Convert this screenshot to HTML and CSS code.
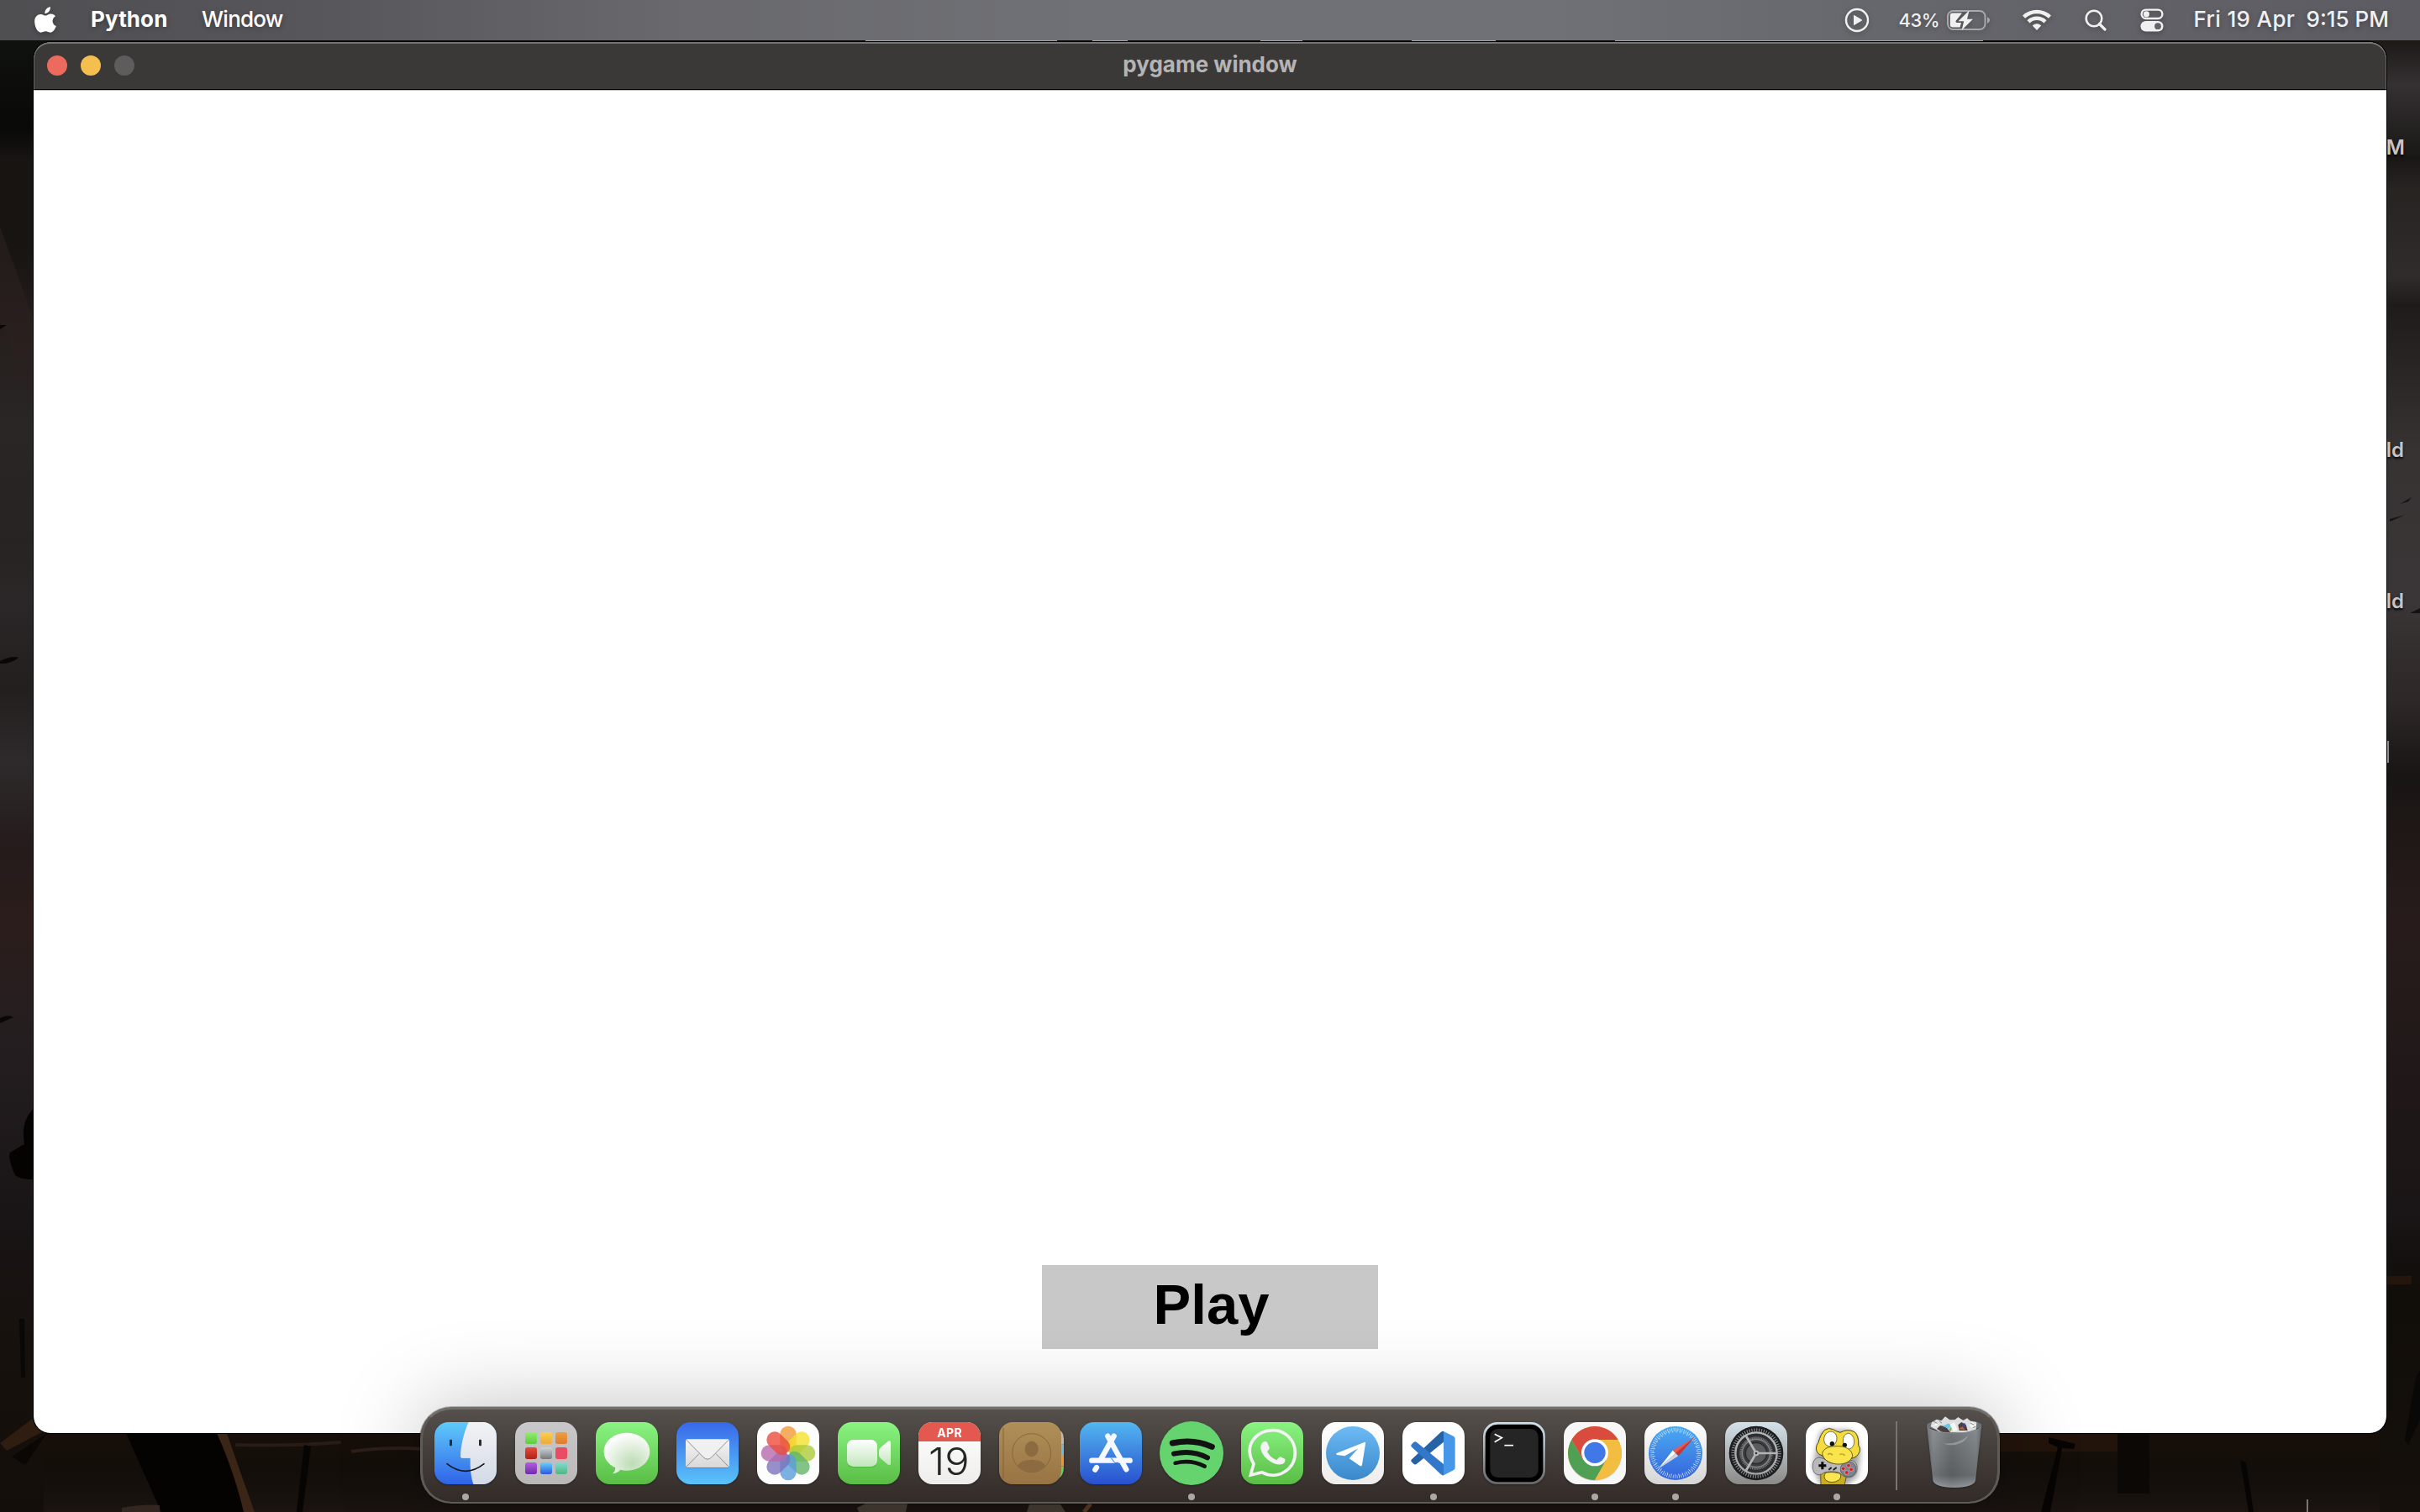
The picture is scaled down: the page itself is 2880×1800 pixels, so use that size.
FILE: index.html
```
<!DOCTYPE html>
<html lang="en">
<head>
<meta charset="utf-8">
<title>pygame window</title>
<link rel="stylesheet" href="styles.css">
</head>
<body>
<div class="desktop">
  <svg class="wallpaper" viewBox="0 0 2880 1800" aria-hidden="true">
    <defs>
      <linearGradient id="wl" x1="0" y1="0" x2="0" y2="1">
        <stop offset="0" stop-color="#10120e"/><stop offset=".06" stop-color="#090908"/>
        <stop offset=".08" stop-color="#171412"/><stop offset=".14" stop-color="#171412"/>
        <stop offset=".2" stop-color="#261f1d"/><stop offset=".26" stop-color="#292625"/>
        <stop offset=".34" stop-color="#262322"/><stop offset=".38" stop-color="#2b2728"/>
        <stop offset=".44" stop-color="#231f1f"/><stop offset=".49" stop-color="#2e2a2b"/>
        <stop offset=".55" stop-color="#241b1a"/><stop offset=".6" stop-color="#2b1d1b"/>
        <stop offset=".68" stop-color="#241e20"/>
        <stop offset=".8" stop-color="#191415"/><stop offset=".88" stop-color="#17110e"/>
        <stop offset="1" stop-color="#140e0a"/>
      </linearGradient>
      <linearGradient id="wr" x1="0" y1="0" x2="0" y2="1">
        <stop offset="0" stop-color="#1c1917"/><stop offset=".03" stop-color="#353133"/>
        <stop offset=".08" stop-color="#191716"/><stop offset=".1" stop-color="#262321"/><stop offset=".16" stop-color="#2f2c2b"/>
        <stop offset=".18" stop-color="#1f1b1a"/><stop offset=".28" stop-color="#373333"/>
        <stop offset=".38" stop-color="#3a3536"/><stop offset=".45" stop-color="#2d2727"/>
        <stop offset=".5" stop-color="#191514"/><stop offset=".6" stop-color="#271c1b"/>
        <stop offset=".8" stop-color="#1a1516"/><stop offset=".85" stop-color="#110d09"/>
        <stop offset="1" stop-color="#15100c"/>
      </linearGradient>
      <linearGradient id="wb" x1="0" y1="0" x2="0" y2="1">
        <stop offset="0" stop-color="#180e09"/><stop offset=".5" stop-color="#130e0a"/><stop offset="1" stop-color="#1a1310"/>
      </linearGradient>
    </defs>
    <rect width="2880" height="1800" fill="#120e0b"/>
    <rect y="48" width="60" height="1752" fill="url(#wl)"/>
    <rect x="2820" y="48" width="60" height="1752" fill="url(#wr)"/>
    <rect x="52" y="1700" width="2780" height="100" fill="url(#wb)"/>
    <path d="M0 270L40 380V480L0 380Z" fill="#2c211f" opacity=".6"/>
    <path d="M0 787Q14 780 22 783Q12 791 0 790Z M0 1212Q10 1207 16 1211L0 1218Z M0 387H8L0 392Z" fill="#0a0807"/>
    <path d="M2856 600L2870 592L2866 597Z M2844 618L2862 613L2844 621Z M2868 730L2880 724V730Z" fill="#141111"/>
    <path d="M40 1320 Q27 1332 28 1352 L29 1362 L12 1372 Q9 1378 17 1397 Q20 1404 40 1404Z" fill="#040302"/>
    <path d="M23 1570 L29 1570 L30 1640 L25 1640Z" fill="#0a0806"/>
    <path d="M0 1718 L40 1688 L52 1704 L8 1727Z" fill="#301d11"/>
    <path d="M14 1734 L56 1706 L30 1744Z" fill="#0a0705"/>
    <path d="M150 1706 H258 L300 1800 H192Z" fill="#040302"/>
    <path d="M258 1706 H270 Q285 1750 303 1800 H290 Q278 1750 258 1706Z" fill="#3a2517"/>
    <path d="M280 1720 Q345 1722 406 1717" stroke="#291b16" stroke-width="4" fill="none"/>
    <path d="M418 1728 Q460 1722 505 1725" stroke="#2c1e18" stroke-width="4" fill="none"/>
    <path d="M362 1720 L370 1722 L360 1800 H353Z" fill="#070504"/>
    <path d="M145 1795 Q170 1790 190 1792 V1800 H145Z" fill="#33251f"/>
    <path d="M2380 1706 H2520 V1728 H2380Z" fill="#22140b"/>
    <path d="M2520 1706 h38 v72 h-38z" fill="#0c0806"/>
    <path d="M2438 1711 L2470 1719 L2468 1725 L2454 1724 L2440 1800 H2429 L2449 1723 L2438 1718Z" fill="#070504"/>
    <path d="M2666 1738 L2673 1741 L2682 1800 H2676Z" fill="#070504"/>
    <path d="M2746 1785 V1800" stroke="#777" stroke-width="2"/>
    <path d="M2875 1640 L2880 1632 V1690 L2866 1720 L2862 1714Z" fill="#0a0806"/>
    <path d="M2840 1519 H2870 V1529 H2840Z" fill="#24160c"/>
    <path d="M1020 1795 L1030 1790 H1080 L1078 1800 H1022Z M1225 1791 H1262 L1268 1800 H1222Z" fill="#443c33"/>
    <path d="M1290 1800 L1298 1790" stroke="#583a23" stroke-width="5"/>
    <path d="M1030 49 H1258 M1300 49H1342 M1500 49 H1550 M1680 49 H1780 M1922 49H2360" stroke="#a3a4aa" stroke-width="2"/>
  </svg>

  <div class="file-label label-a">M</div>
  <div class="file-label label-b">ld</div>
  <div class="file-label label-c">ld</div>
  <div class="file-edge"></div>

  <header class="menubar">
    <div class="menu-left">
      <svg class="apple" viewBox="0 0 78 94" aria-hidden="true"><path fill="#fff" d="M57 1C58 15 47 25 37 25C36 12 46 2 57 1ZM40 32C46 32 50 26 59 26C67 26 73 31 75 34C60 44 63 64 78 70C74 82 66 93 57 93C50 93 47 89 40 89C33 89 29 93 23 93C9 93 0 69 0 53C0 36 11 27 22 27C30 27 34 32 40 32Z"/></svg>
      <span class="app-name">Python</span>
      <span class="menu-item">Window</span>
    </div>
    <div class="menu-right">
      <svg class="ic-play" viewBox="0 0 30 30" aria-hidden="true"><circle cx="15" cy="15" r="13" fill="none" stroke="#f0f0f0" stroke-width="2.4"/><path fill="#f0f0f0" d="M11 9.5Q11 8.6 12 9.2L20.5 14.2Q21.6 15 20.5 15.8L12 20.8Q11 21.4 11 20.5Z"/></svg>
      <span class="percent">43%</span>
      <svg class="ic-battery" viewBox="0 0 52 26" aria-hidden="true"><rect x="1" y="2" width="44.500" height="22" rx="6.500" fill="none" stroke="#a9a9ad" stroke-width="2"/><path d="M48 9.500Q51 10.500 51 13T48 17Z" fill="#a9a9ad"/><path fill="#f0f0f0" d="M7 4.500H18L10.500 14Q10 16 13 16H17L15.500 21.500H7Q3.800 21.500 3.800 18.500V7.500Q3.800 4.500 7 4.500Z"/><path fill="#f0f0f0" d="M26.500 1.500L13.500 14.200H20.200L17.600 25L31 11.800H24Z"/></svg>
      <svg class="ic-wifi" viewBox="0 0 34 25" aria-hidden="true"><g fill="none" stroke="#f0f0f0" stroke-width="4.500"><path d="M1.500 9.200A22.500 22.500 0 0 1 32.500 9.200"/><path d="M7 14.800A14.500 14.500 0 0 1 27 14.800"/></g><path fill="#f0f0f0" d="M17 25L11.800 19.400A7.500 7.500 0 0 1 22.200 19.400Z"/></svg>
      <svg class="ic-search" viewBox="0 0 26 26" aria-hidden="true"><circle cx="11" cy="11" r="9.300" fill="none" stroke="#f0f0f0" stroke-width="2.600"/><path d="M17.500 17.500L24 24" stroke="#f0f0f0" stroke-width="3.200" stroke-linecap="round"/></svg>
      <svg class="ic-control" viewBox="0 0 28 28" aria-hidden="true"><rect x="1.600" y="1.600" width="24.800" height="10.400" rx="5.200" fill="none" stroke="#f0f0f0" stroke-width="2.400"/><circle cx="7.400" cy="6.800" r="3.600" fill="#f0f0f0"/><rect x=".5" y="15" width="27" height="12.500" rx="6.200" fill="#f0f0f0"/><circle cx="21" cy="21.200" r="3.900" fill="#64656b"/></svg>
      <span class="date">Fri 19 Apr</span><span class="time">9:15 PM</span>
    </div>
  </header>

  <main class="window">
    <div class="titlebar">
      <div class="lights"><i class="light red"></i><i class="light yellow"></i><i class="light gray"></i></div>
      <div class="title">pygame window</div>
      <div></div>
    </div>
    <div class="canvas"><button class="play" type="button"><span>Play</span></button></div>
  </main>

  <nav class="dock">
    <div class="app running">
      <svg viewBox="0 0 222 222"><defs><linearGradient id="f1" x2="0" y2="1"><stop stop-color="#5fcbfa"/><stop offset="1" stop-color="#2f63e8"/></linearGradient><linearGradient id="f2" x2="0" y2="1"><stop stop-color="#f3f3f5"/><stop offset="1" stop-color="#d2dae6"/></linearGradient><clipPath id="rc"><rect width="222" height="222" rx="50"/></clipPath></defs>
      <g clip-path="url(#rc)"><rect width="222" height="222" fill="url(#f1)"/><path fill="url(#f2)" d="M122 0C104 40 94 85 93 123Q93 130 99 130H128C127 165 130 195 139 222H222V0Z"/></g>
      <path d="M93 126Q93 130 99 130H128" fill="none" stroke="#3b78b8" stroke-width="1.500"/><rect x="54" y="62" width="9" height="23" rx="3" fill="#222b33"/><rect x="159" y="62" width="9" height="23" rx="3" fill="#2b2b2b"/><path d="M45 149Q111 201 177 149" fill="none" stroke="#16181c" stroke-width="5" stroke-linecap="round"/></svg>
    </div>
    <div class="app">
      <svg viewBox="0 0 222 222"><defs><linearGradient id="l0" x2="0" y2="1"><stop stop-color="#c8c8ca"/><stop offset="1" stop-color="#bab8b7"/></linearGradient><linearGradient id="l1" x2="0" y2="1"><stop stop-color="#94ee6b"/><stop offset="1" stop-color="#5dcc45"/></linearGradient><linearGradient id="l2" x2="0" y2="1"><stop stop-color="#f8d050"/><stop offset="1" stop-color="#eeaa3a"/></linearGradient><linearGradient id="l3" x2="0" y2="1"><stop stop-color="#efa03d"/><stop offset="1" stop-color="#df7b32"/></linearGradient><linearGradient id="l4" x2="0" y2="1"><stop stop-color="#e84b3c"/><stop offset="1" stop-color="#ad2319"/></linearGradient><linearGradient id="l5" x2="0" y2="1"><stop stop-color="#ccd6da"/><stop offset="1" stop-color="#77797b"/></linearGradient><linearGradient id="l7" x2="0" y2="1"><stop stop-color="#b35fe0"/><stop offset="1" stop-color="#702bac"/></linearGradient><linearGradient id="l8" x2="0" y2="1"><stop stop-color="#64d3fb"/><stop offset="1" stop-color="#2c58e0"/></linearGradient><linearGradient id="l9" x2="0" y2="1"><stop stop-color="#80dcd0"/><stop offset="1" stop-color="#50b584"/></linearGradient></defs>
      <rect width="222" height="222" rx="50" fill="url(#l0)"/><rect x="36" y="36" width="42" height="42" rx="8" fill="url(#l1)"/><rect x="90" y="36" width="42" height="42" rx="8" fill="url(#l2)"/><rect x="144" y="36" width="42" height="42" rx="8" fill="url(#l3)"/><rect x="36" y="90" width="42" height="42" rx="8" fill="url(#l4)"/><rect x="90" y="90" width="42" height="42" rx="8" fill="url(#l5)"/><rect x="144" y="90" width="42" height="42" rx="8" fill="#ea4c63"/><rect x="36" y="144" width="42" height="42" rx="8" fill="url(#l7)"/><rect x="90" y="144" width="42" height="42" rx="8" fill="url(#l8)"/><rect x="144" y="144" width="42" height="42" rx="8" fill="url(#l9)"/></svg>
    </div>
    <div class="app">
      <svg viewBox="0 0 222 222"><defs><linearGradient id="g" x2="0" y2="1"><stop stop-color="#8af482"/><stop offset="1" stop-color="#59bd45"/></linearGradient><radialGradient id="m2" cx=".62" cy=".75" r=".75"><stop stop-color="#bcdcb4"/><stop offset=".55" stop-color="#e2efde"/><stop offset="1" stop-color="#fff"/></radialGradient></defs>
      <rect width="222" height="222" rx="50" fill="url(#g)"/><path fill="url(#m2)" d="M111 38C156 38 193 67 193 106S156 173 111 173Q98 173 88 170Q76 183 60 184Q70 176 70 163C46 152 29 131 29 106C29 67 66 38 111 38Z"/></svg>
    </div>
    <div class="app">
      <svg viewBox="0 0 222 222"><defs><linearGradient id="ma" x2="0" y2="1"><stop stop-color="#3868e8"/><stop offset="1" stop-color="#5ac4fa"/></linearGradient><linearGradient id="mb" x2="0" y2="1"><stop stop-color="#f5f5f5"/><stop offset="1" stop-color="#d8d8da"/></linearGradient></defs>
      <rect width="222" height="222" rx="50" fill="url(#ma)"/><rect x="33" y="64" width="156" height="101" rx="8" fill="#266fa8" opacity=".5"/><rect x="33" y="61" width="156" height="101" rx="7" fill="url(#mb)"/><path d="M37 158L81 113M185 158L141 113" stroke="#909090" stroke-width="3"/><path d="M36 64L95 124Q111 141 127 124L186 64" fill="#f0f0f0" stroke="#8f9092" stroke-width="3"/></svg>
    </div>
    <div class="app">
      <svg viewBox="0 0 222 222"><rect width="222" height="222" rx="50" fill="#fdfdfd"/><g class="petals"><rect x="82" y="14" width="58" height="95" rx="29" fill="#f09a38"/><rect x="82" y="14" width="58" height="95" rx="29" fill="#f5e02c" transform="rotate(45 111 111)"/><rect x="82" y="14" width="58" height="95" rx="29" fill="#adcb3a" transform="rotate(90 111 111)"/><rect x="82" y="14" width="58" height="95" rx="29" fill="#62b566" transform="rotate(135 111 111)"/><rect x="82" y="14" width="58" height="95" rx="29" fill="#5a9ddb" transform="rotate(180 111 111)"/><rect x="82" y="14" width="58" height="95" rx="29" fill="#7c73bd" transform="rotate(225 111 111)"/><rect x="82" y="14" width="58" height="95" rx="29" fill="#b76aac" transform="rotate(270 111 111)"/><rect x="82" y="14" width="58" height="95" rx="29" fill="#ec4c3c" transform="rotate(315 111 111)"/></g><circle cx="111" cy="111" r="5" fill="#fff"/></svg>
    </div>
    <div class="app">
      <svg viewBox="0 0 222 222"><defs><linearGradient id="ft" x2="0" y2="1"><stop stop-color="#fff"/><stop offset="1" stop-color="#c2e6bb"/></linearGradient></defs><rect width="222" height="222" rx="50" fill="url(#g)"/><rect x="33" y="66" width="108" height="97" rx="22" fill="#3c9b30" opacity=".4"/><rect x="33" y="63" width="108" height="96" rx="22" fill="url(#ft)"/><path fill="url(#ft)" d="M147 103Q147 96 153 91L178 70Q189 63 189 73V147Q189 158 178 151L153 130Q147 125 147 118Z"/></svg>
    </div>
    <div class="app">
      <svg viewBox="0 0 222 222"><defs><linearGradient id="ca" x2="0" y2="1"><stop stop-color="#fff"/><stop offset="1" stop-color="#eeedeb"/></linearGradient></defs><g clip-path="url(#rc)"><rect width="222" height="222" fill="url(#ca)"/><rect width="222" height="69" fill="#e3584f"/></g><text class="cal-month" x="111" y="53" text-anchor="middle" textLength="88">APR</text><text class="cal-day" x="109" y="188" text-anchor="middle" textLength="146" lengthAdjust="spacingAndGlyphs">19</text></svg>
    </div>
    <div class="app">
      <svg viewBox="0 0 222 222"><defs><linearGradient id="co" x2="0" y2="1"><stop stop-color="#b09058"/><stop offset="1" stop-color="#987344"/></linearGradient></defs><path d="M205 26Q231 28 231 60V80H205Z" fill="#bcb9b3"/><path d="M205 80H231V120H205Z" fill="#6fb9e2"/><path d="M205 118H231V158H205Z" fill="#ee9433"/><path d="M205 158H231Q231 190 213 200Z" fill="#66cf68"/><rect width="222" height="222" rx="48" fill="url(#co)"/><path d="M15 20V202" stroke="#866437" stroke-width="3"/><circle cx="116" cy="110" r="69" fill="none" stroke="#86683d" stroke-width="3"/><ellipse cx="116" cy="96" rx="24" ry="28" fill="#8b6b3f"/><path d="M66 156Q80 134 116 134T166 156Q146 179 116 179T66 156Z" fill="#8b6b3f"/></svg>
    </div>
    <div class="app">
      <svg viewBox="0 0 222 222"><defs><linearGradient id="as" x2="0" y2="1"><stop stop-color="#53b7f0"/><stop offset="1" stop-color="#2850cf"/></linearGradient></defs><rect width="222" height="222" rx="50" fill="url(#as)"/><g stroke="#f5f9ff" stroke-width="19" stroke-linecap="round"><path d="M43 137H179"/><path d="M122 50L78 128"/><path d="M100 50L166 169"/><path d="M60 162L55 170"/></g><path d="M139 145H125L112 128" fill="none" stroke="#3576e0" stroke-width="3"/></svg>
    </div>
    <div class="app running">
      <svg viewBox="0 0 222 222"><circle cx="111" cy="111" r="114" fill="#65d36e"/><g fill="none" stroke="#121212" stroke-linecap="round"><path d="M43 75Q119 58 184 88" stroke-width="21"/><path d="M48 113Q114 98 168 127" stroke-width="18"/><path d="M53 146Q111 133 158 158" stroke-width="14"/></g></svg>
    </div>
    <div class="app">
      <svg viewBox="0 0 222 222"><rect width="222" height="222" rx="50" fill="url(#g)"/><path d="M34 189L45 149C5 80 58 29 113 29C158 29 193 65 193 109C193 169 131 209 74 179Z" fill="none" stroke="#f3f3f3" stroke-width="11"/><path fill="#f3f3f3" d="M71 82Q75 69 88 69Q92 69 94 74L101 91Q102 96 93 105Q103 126 127 136Q137 123 141 124L157 132Q159 145 149 149C114 163 61 113 71 82Z"/></svg>
    </div>
    <div class="app">
      <svg viewBox="0 0 222 222"><defs><linearGradient id="t1" x2="0" y2="1"><stop stop-color="#6cbbf5"/><stop offset="1" stop-color="#3a88ca"/></linearGradient></defs><rect width="222" height="222" rx="50" fill="url(#ca)"/><circle cx="111" cy="111" r="96" fill="url(#t1)"/><path fill="#fff" d="M53 111L152 72Q158 70 156 77L144 153Q142 160 136 156L98 130L130 94L82 121L54 117Q49 114 53 111Z"/></svg>
    </div>
    <div class="app running">
      <svg viewBox="0 0 222 222"><rect width="222" height="222" rx="50" fill="#fff"/><path d="M147 33V71L50 150Q45 153 40 149L32 141Q29 137 32 134L136 37Q142 31 147 33Z" fill="#2563a6"/><path d="M147 190V150L50 71Q45 68 40 72L32 80Q29 84 32 88L136 185Q142 191 147 190Z" fill="#3277c9"/><path d="M147 33L182 50Q188 53 188 59V163Q188 169 182 172L147 190Z" fill="#4797e8"/></svg>
    </div>
    <div class="app">
      <svg viewBox="0 0 222 222"><defs><linearGradient id="te" x2="0" y2="1"><stop stop-color="#cfe2ec"/><stop offset="1" stop-color="#6a6668"/></linearGradient></defs><rect width="222" height="222" rx="50" fill="url(#te)"/><rect x="8" y="8" width="206" height="206" rx="44" fill="#000"/><rect x="25" y="24" width="172" height="174" rx="28" fill="#252525"/><path d="M41 43L67 56L41 71" fill="none" stroke="#fff" stroke-width="5"/><path d="M76 83H108" stroke="#fff" stroke-width="5"/></svg>
    </div>
    <div class="app running">
      <svg viewBox="0 0 222 222"><rect width="222" height="222" rx="50" fill="#f7f7f7"/><circle cx="111" cy="114" r="96" fill="#b9b49c" opacity=".5"/><circle cx="111" cy="111" r="96" fill="#f3bd42"/><path d="M111 63H194A96 96 0 0 0 28 63L69 135Z" fill="#d94b3d"/><path d="M28 63A96 96 0 0 0 111 207L152 135L69 135Z" fill="#4f9f55"/><path d="M111 63H194A96 96 0 0 1 111 207L152 135Z" fill="#f3bd42"/><circle cx="111" cy="109" r="48" fill="#fff"/><circle cx="111" cy="109" r="38" fill="#4178e8"/></svg>
    </div>
    <div class="app running">
      <svg viewBox="0 0 222 222"><defs><linearGradient id="sa" x2="0" y2="1"><stop stop-color="#4aabf2"/><stop offset="1" stop-color="#3564dc"/></linearGradient><linearGradient id="sb" x2="0" y2="1"><stop stop-color="#fff"/><stop offset="1" stop-color="#d6d6d6"/></linearGradient></defs><rect width="222" height="222" rx="50" fill="url(#sb)"/><circle cx="111" cy="111" r="96" fill="url(#sa)"/><circle cx="111" cy="111" r="84" fill="none" stroke="#d9ecfc" stroke-width="12" stroke-dasharray="2 5.330"/><circle cx="111" cy="111" r="77" fill="none" stroke="#d9ecfc" stroke-width="6" stroke-dasharray="2 11.440"/><path d="M179 54L101 101L111 111Z" fill="#f0564a"/><path d="M179 54L121 121L111 111Z" fill="#cc342c"/><path d="M49 167L101 101L111 111Z" fill="#fff"/><path d="M49 167L121 121L111 111Z" fill="#cfd4da"/></svg>
    </div>
    <div class="app">
      <svg viewBox="0 0 222 222"><defs><linearGradient id="se" x2="0" y2="1"><stop stop-color="#d4e1e9"/><stop offset="1" stop-color="#8b8a87"/></linearGradient><linearGradient id="sg" x2="0" y2="1"><stop stop-color="#b3babd"/><stop offset="1" stop-color="#a7a7a5"/></linearGradient></defs><rect width="222" height="222" rx="50" fill="url(#se)"/><circle cx="111" cy="111" r="97" fill="#1c1d1e"/><circle cx="111" cy="111" r="83" fill="none" stroke="#84888a" stroke-width="12" stroke-dasharray="3.500 5.190"/><circle cx="111" cy="111" r="74" fill="#2c2e2f" stroke="url(#sg)" stroke-width="7"/><circle cx="111" cy="111" r="56" fill="#444647" stroke="#7b7e7f" stroke-width="7" stroke-dasharray="3 2.860"/><circle cx="111" cy="111" r="50" fill="#3c3e3f" stroke="#7f8283" stroke-width="5"/><circle cx="111" cy="111" r="38" fill="#5a5d5e" stroke="#2c2e2f" stroke-width="5"/><path d="M111 111H184M111 111L74 48M111 111L74 174" stroke="#b2b6b7" stroke-width="8"/><circle cx="111" cy="111" r="10" fill="#b2b6b7"/><circle cx="111" cy="111" r="4" fill="#333"/></svg>
    </div>
    <div class="app running">
      <svg viewBox="0 0 222 222"><defs><filter id="soft" x="-30%" y="-30%" width="160%" height="160%"><feGaussianBlur stdDeviation="9"/></filter></defs><g clip-path="url(#rc)"><rect width="222" height="222" fill="#fff"/><path d="M50 40Q70 15 110 30Q150 20 180 45L195 110L185 195L140 230H55L25 160Z" fill="#777" opacity=".65" filter="url(#soft)"/><path d="M53 180H148L138 226H54Z" fill="#c9ad24" stroke="#332d12" stroke-width="2"/>
      <path d="M55 128C30 120 20 150 26 170C32 192 52 192 66 180Q100 172 122 182C140 204 176 202 183 172C188 145 168 130 145 138Q100 145 55 128Z" fill="#b9b9bb" stroke="#4a4a4c" stroke-width="2"/><circle cx="152" cy="168" r="28" fill="#7b8490" stroke="#45484d" stroke-width="2"/><path d="M55 142H64V151H73V160H64V169H55V160H46V151H55Z" fill="#0b0b0b"/><path d="M82 170L92 162M98 171L110 162" stroke="#222" stroke-width="6"/><g fill="#d3232a" stroke="#e9d7d7" stroke-width="1.500"><circle cx="134" cy="166" r="7"/><circle cx="153" cy="155" r="7"/><circle cx="162" cy="169" r="7"/><circle cx="146" cy="180" r="7"/></g>
      <path d="M68 28Q82 18 98 26Q110 34 123 37Q150 22 174 35Q190 48 188 83Q196 92 193 104Q184 128 160 130Q130 150 90 146Q68 137 60 120Q38 114 37 94Q38 80 45 73Q53 42 68 28Z" fill="#f4dc3e" stroke="#4b430f" stroke-width="3"/><ellipse cx="88" cy="60" rx="23" ry="27" fill="#fff" stroke="#453f1c" stroke-width="2" transform="rotate(14 88 60)"/><ellipse cx="153" cy="68" rx="20" ry="28" fill="#fff" stroke="#453f1c" stroke-width="2" transform="rotate(-4 153 68)"/><circle cx="94" cy="77" r="8" fill="#111"/><circle cx="139" cy="82" r="8" fill="#111"/><path d="M110 86C140 84 166 98 167 121C160 144 136 151 112 150C82 148 61 132 59 112C63 94 82 86 110 86Z" fill="#f9e44c" stroke="#514811" stroke-width="2.500"/><path d="M78 116Q88 108 96 118M121 116Q130 110 140 119" fill="none" stroke="#b79d25" stroke-width="4"/><path d="M72 180Q95 176 122 183Q130 196 118 207Q94 222 72 208Q60 194 72 180Z" fill="#fae651" stroke="#514811" stroke-width="2.500"/></g></svg>
    </div>
    <div class="separator"></div>
    <div class="app">
      <svg viewBox="0 0 222 222"><defs><linearGradient id="tr"><stop stop-color="#71777b"/><stop offset=".12" stop-color="#8d9397"/><stop offset=".45" stop-color="#74787b"/><stop offset=".7" stop-color="#7f8487"/><stop offset=".9" stop-color="#878d91"/><stop offset="1" stop-color="#686e73"/></linearGradient><linearGradient id="ts" x2="0" y2="1"><stop stop-color="#000" stop-opacity="0"/><stop offset=".8" stop-color="#000" stop-opacity=".22"/><stop offset="1" stop-color="#cdd8e0" stop-opacity=".25"/></linearGradient></defs><ellipse cx="110" cy="11" rx="98" ry="20" fill="#6c7378"/><path d="M26 16L30 0L48 -10L64 -5L78 -20L94 -8L112 -8L124 -18L142 -6L156 -14L168 -4L190 0L188 26L150 38L60 36Z" fill="#dedede"/><path d="M48 24L60 12L80 16L96 36L66 36Z M124 10L136 0L152 10L158 30L128 30Z" fill="#4c3f42"/><path d="M68 14L88 5L104 10L90 24Z" fill="#67c7e4"/><path d="M90 27L104 12L98 34Z" fill="#76bb56"/><path d="M30 14L54 0L48 12Z M164 12L174 -2L188 10L176 22Z M94 8L110 0L122 28L108 34Z" fill="#f6f6f6"/><path d="M124 24L140 16L148 28Z" fill="#c95a35"/><path d="M138 5L148 4L154 18L142 14Z" fill="#43438c"/><path d="M36 -2L50 4M56 -4L66 4M168 4L182 10M176 20L186 16" stroke="#888" stroke-width="3"/><path d="M12 11Q22 37 110 38Q198 37 208 11L186 208Q182 232 110 234Q38 232 34 208Z" fill="url(#tr)"/><path d="M12 11Q22 37 110 38Q198 37 208 11L186 208Q182 232 110 234Q38 232 34 208Z" fill="url(#ts)"/><path d="M14 17Q30 37 110 39Q190 37 206 17" fill="none" stroke="#959ca1" stroke-width="2"/><path d="M70 76Q125 80 160 48Q142 84 90 82Z" fill="#bfc3c5" opacity=".45"/></svg>
    </div>
  </nav>
</div>
</body>
</html>
```
FILE: styles.css
```
* { box-sizing: border-box; }
body { margin: 0; background: #120e0b; font-family: Inter, "Liberation Sans", sans-serif; }
.desktop { position: relative; width: 2880px; height: 1800px; overflow: hidden; }
.wallpaper { position: absolute; inset: 0; width: 2880px; height: 1800px; }

.file-label { position: absolute; right: 19px; color: #c6c5c5; font-size: 24px; font-weight: 600; line-height: 30px; text-shadow: 0 2px 3px #000; }
.label-a { top: 161px; right: 18px; }
.label-b { top: 521px; }
.label-c { top: 701px; }
.file-edge { position: absolute; left: 2841px; top: 882px; width: 2px; height: 26px; background: #8f8e8e; }

.menubar { position: relative; display: flex; justify-content: space-between; height: 48px; padding: 0 37px 0 41px; color: #fff; font-size: 26px; line-height: 46px; background: linear-gradient(90deg, #4f4f52 0, #57565b 380px, #68686d 800px, #707176 1300px, #707176 1850px, #66676c 2250px, #5c5b62 100%); text-shadow: 0 2px 6px rgba(0,0,0,.3); }
.menubar svg { filter: drop-shadow(0 2px 3px rgba(0,0,0,.25)); }
.menubar span { margin-top: -2px; }
.menu-left, .menu-right { display: flex; align-items: center; white-space: pre; }
.menu-right { color: #f0f0f0; }
.apple { width: 26px; height: 31px; margin: -2px 41px 0 0; }
.app-name { width: 132px; font-weight: 700; letter-spacing: .1px; }
.menu-item { font-weight: 500; letter-spacing: -.75px; }
.ic-play { width: 30px; height: 30px; margin: -1px 35px 0 0; }
.menubar .percent { width: 57px; margin-top: 0; font-size: 22px; font-weight: 500; letter-spacing: -.5px; }
.ic-battery { width: 52px; height: 26px; margin-right: 38px; }
.ic-wifi { width: 34px; height: 25px; margin: -2px 40px 0 0; }
.ic-search { width: 26px; height: 26px; margin-right: 40px; }
.ic-control { width: 28px; height: 28px; margin: -1px 36px 0 0; }
.date { width: 134px; font-weight: 500; letter-spacing: .35px; }
.time { font-weight: 500; }

.window { position: absolute; left: 40px; top: 50px; width: 2800px; height: 1656px; display: flex; flex-direction: column; border-radius: 20px; overflow: hidden; background: #fff; box-shadow: 0 0 0 1px #000; outline: 1px solid #000; }
.titlebar { display: grid; grid-template-columns: 1fr auto 1fr; align-items: center; height: 57px; background: #3b3838; border: 1px solid #666565; border-top: 2px solid #757474; border-bottom: 1px solid #000; border-radius: 20px 20px 0 0; }
.lights { display: flex; gap: 16px; padding-left: 15px; margin-top: -2px; }
.light { width: 24px; height: 24px; border-radius: 50%; }
.red { background: #ed6a5e; }
.yellow { background: #f5bf4f; }
.gray { background: #5e5c5d; }
.title { color: #b5b4b4; font-size: 26px; line-height: 32px; font-weight: 700; margin-top: -4px; letter-spacing: 0; }
.canvas { flex: 1; display: flex; justify-content: center; align-items: flex-end; padding-bottom: 100px; border-top: 1px solid #bdbdbd; background: #fff; }
.play { width: 400px; height: 100px; border: 0; padding: 0 0 6px 3px; background: #c8c8c8; color: #000; font: bold 67px/94px "Liberation Sans", Arial, sans-serif; }

.dock { position: absolute; left: 500px; top: 1675px; width: 1880px; height: 115px; display: flex; gap: 22px; padding: 15px 14px 0; border: 3px solid #5d5a57; border-top-color: #716f6b; border-bottom-width: 2px; border-radius: 37px; background: linear-gradient(#55504c, #443e3a 45%, #332b28) padding-box, #5d5a57; box-shadow: 0 0 0 1px rgba(0,0,0,.25), 0 0 100px rgba(0,0,0,.25); }
.app { position: relative; width: 74px; height: 74px; flex: none; }
.app svg { display: block; width: 74px; height: 74px; overflow: visible; filter: drop-shadow(0 1px 1px rgba(0,0,0,.3)); }
.running::after { content: ""; position: absolute; left: 33px; top: 85px; width: 8px; height: 8px; border-radius: 50%; background: #aea8a5; }
.separator { width: 2px; height: 82px; margin: -1px 9px 0 11px; background: #797471; }
.petals rect { opacity: .8; }
.cal-month { font: 700 42px Inter, sans-serif; fill: #fff; }
.cal-day { font: 300 137px Inter, sans-serif; fill: #262626; }
```
